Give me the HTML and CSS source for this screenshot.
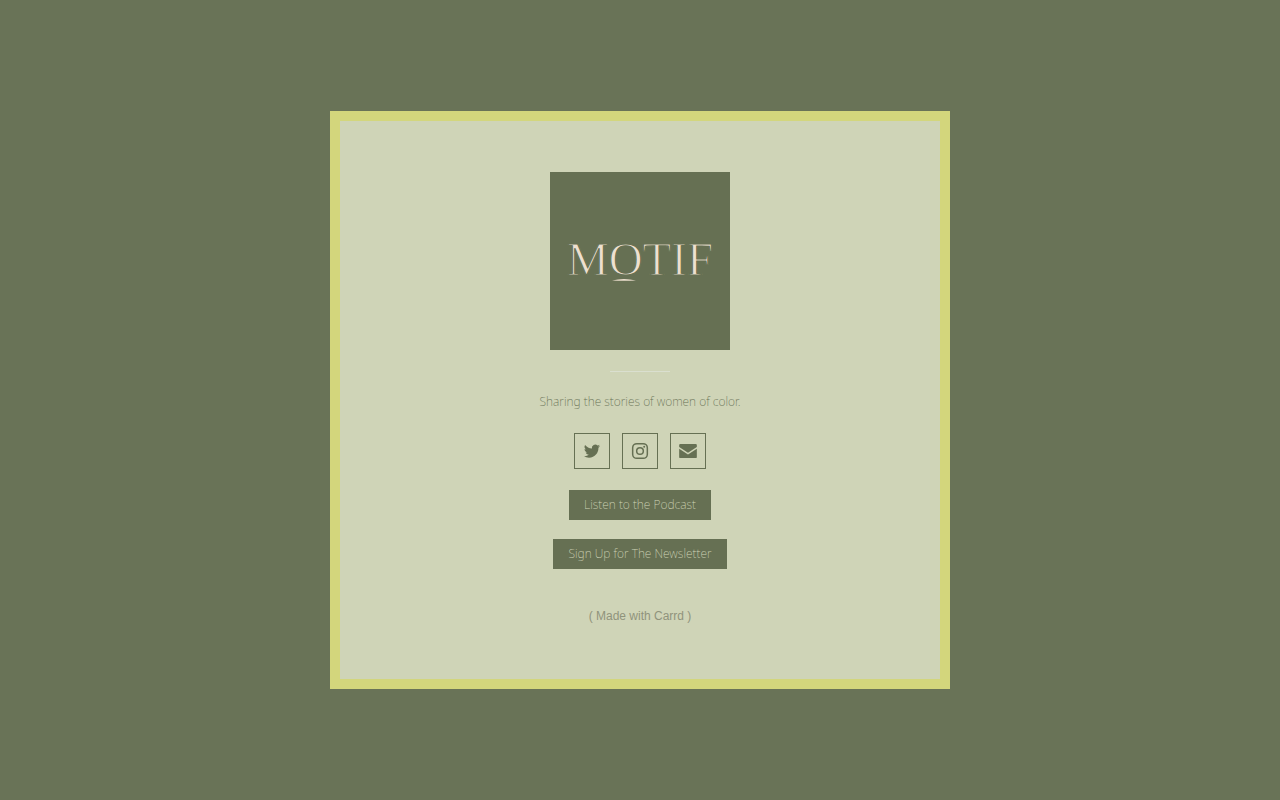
FILE: index.html
```html
<!DOCTYPE html>
<html lang="en">
<head>
  <meta charset="UTF-8">
  <meta name="viewport" content="width=device-width, initial-scale=1.0">
  <title>Motif</title>
  <link rel="stylesheet" href="styles.css">
</head>
<body>
  <main class="card">
    <div class="logo">
      <svg viewBox="0 0 180 178" role="img" aria-label="Motif">
        <text class="logo-text" x="90" y="103" text-anchor="middle">MOTIF</text>
        <path class="logo-line" d="M62 108.500 Q74 105.500 86 108.500 Q74 108.900 62 108.500Z"/>
      </svg>
    </div>

    <hr class="divider">

    <p class="tagline">Sharing the stories of women of color.</p>

    <ul class="icons">
      <li>
        <a href="#" class="icon-link" aria-label="Twitter">
          <svg class="icon" viewBox="0 0 24 24">
            <path d="M21.700 6c-.7.400-1.500.600-2.300.7.800-.5 1.500-1.300 1.800-2.200-.8.5-1.600.8-2.500 1a4 4 0 0 0-6.800 3.600C8.500 8.900 5.600 7.300 3.700 4.900a4 4 0 0 0 1.200 5.300c-.6 0-1.300-.2-1.800-.5v.1c0 1.900 1.400 3.500 3.200 3.900-.6.2-1.200.2-1.800.1.500 1.600 1.900 2.700 3.700 2.700a8 8 0 0 1-5.900 1.700 11.300 11.300 0 0 0 6.100 1.800c7.300 0 11.300-6.100 11.300-11.300v-.6c.8-.5 1.500-1.300 2-2.100z"/>
          </svg>
        </a>
      </li>
      <li>
        <a href="#" class="icon-link" aria-label="Instagram">
          <svg class="icon icon-outline" viewBox="0 0 24 24">
            <rect x="3.200" y="3.200" width="17.600" height="17.600" rx="5"/>
            <circle cx="12" cy="12" r="4"/>
            <circle class="dot" cx="17" cy="7" r="1.200"/>
          </svg>
        </a>
      </li>
      <li>
        <a href="#" class="icon-link" aria-label="Email">
          <svg class="icon" viewBox="0 0 24 24">
            <path d="M2.800 3.500h18.400a1.400 1.400 0 0 1 1.400 1.400v2.200L12 14.200 1.400 7.100V4.900a1.400 1.400 0 0 1 1.400-1.400z"/>
            <path d="M1.400 9.200L12 16.300l10.600-7.100v9.900a1.400 1.400 0 0 1-1.400 1.400H2.800a1.400 1.400 0 0 1-1.400-1.400z"/>
          </svg>
        </a>
      </li>
    </ul>

    <div class="buttons">
      <a href="#" class="btn">Listen to the Podcast</a>
      <a href="#" class="btn">Sign Up for The Newsletter</a>
    </div>

    <a href="#" class="credit">( Made with Carrd )</a>
  </main>
</body>
</html>
```
FILE: styles.css
```css
* {
  margin: 0;
  padding: 0;
  box-sizing: border-box;
}

body {
  min-height: 100vh;
  display: flex;
  align-items: center;
  justify-content: center;
  background: #697357;
  color: #667053;
  font-family: 'Noto Sans', 'Open Sans', sans-serif;
  font-size: 12px;
  font-weight: 200;
  line-height: 18px;
}

a {
  color: inherit;
  text-decoration: none;
}

.card {
  width: 100%;
  max-width: 620px;
  padding: 51px 40px 54px;
  display: flex;
  flex-direction: column;
  align-items: center;
  background: #cfd4b7;
  border: 10px solid #d3d67c;
}

.logo {
  width: 180px;
  background: #667053;
}

.logo svg {
  display: block;
  width: 100%;
}

.logo-text {
  font-family: 'Liberation Serif', serif;
  font-size: 47px;
  fill: #eee0cf;
  stroke: #667053;
  stroke-width: 1.2;
}

.logo-line {
  fill: #eee0cf;
}

.divider {
  width: 60px;
  margin: 21px 0;
  border: 0;
  border-top: 1px solid #dadfcf;
}

.tagline {
  color: #667053;
}

.icons {
  display: flex;
  gap: 12px;
  margin: 22px 0 21px;
  list-style: none;
}

.icon-link {
  display: flex;
  align-items: center;
  justify-content: center;
  width: 36px;
  height: 36px;
  border: 1px solid #667053;
}

.icon {
  width: 20px;
  height: 20px;
  fill: #667053;
}

.icon-outline {
  fill: none;
  stroke: #667053;
  stroke-width: 1.8;
}

.icon-outline .dot {
  fill: #667053;
  stroke: none;
}

.buttons {
  display: flex;
  flex-direction: column;
  align-items: center;
  gap: 19px;
}

.btn {
  padding: 0 15px;
  background: #667053;
  color: #cfd4b7;
  line-height: 30px;
}

.btn:hover {
  background: #697357;
}

.credit {
  margin-top: 38px;
  color: #8f937c;
  font-family: 'Liberation Sans', Arial, sans-serif;
  font-weight: 400;
}
```
